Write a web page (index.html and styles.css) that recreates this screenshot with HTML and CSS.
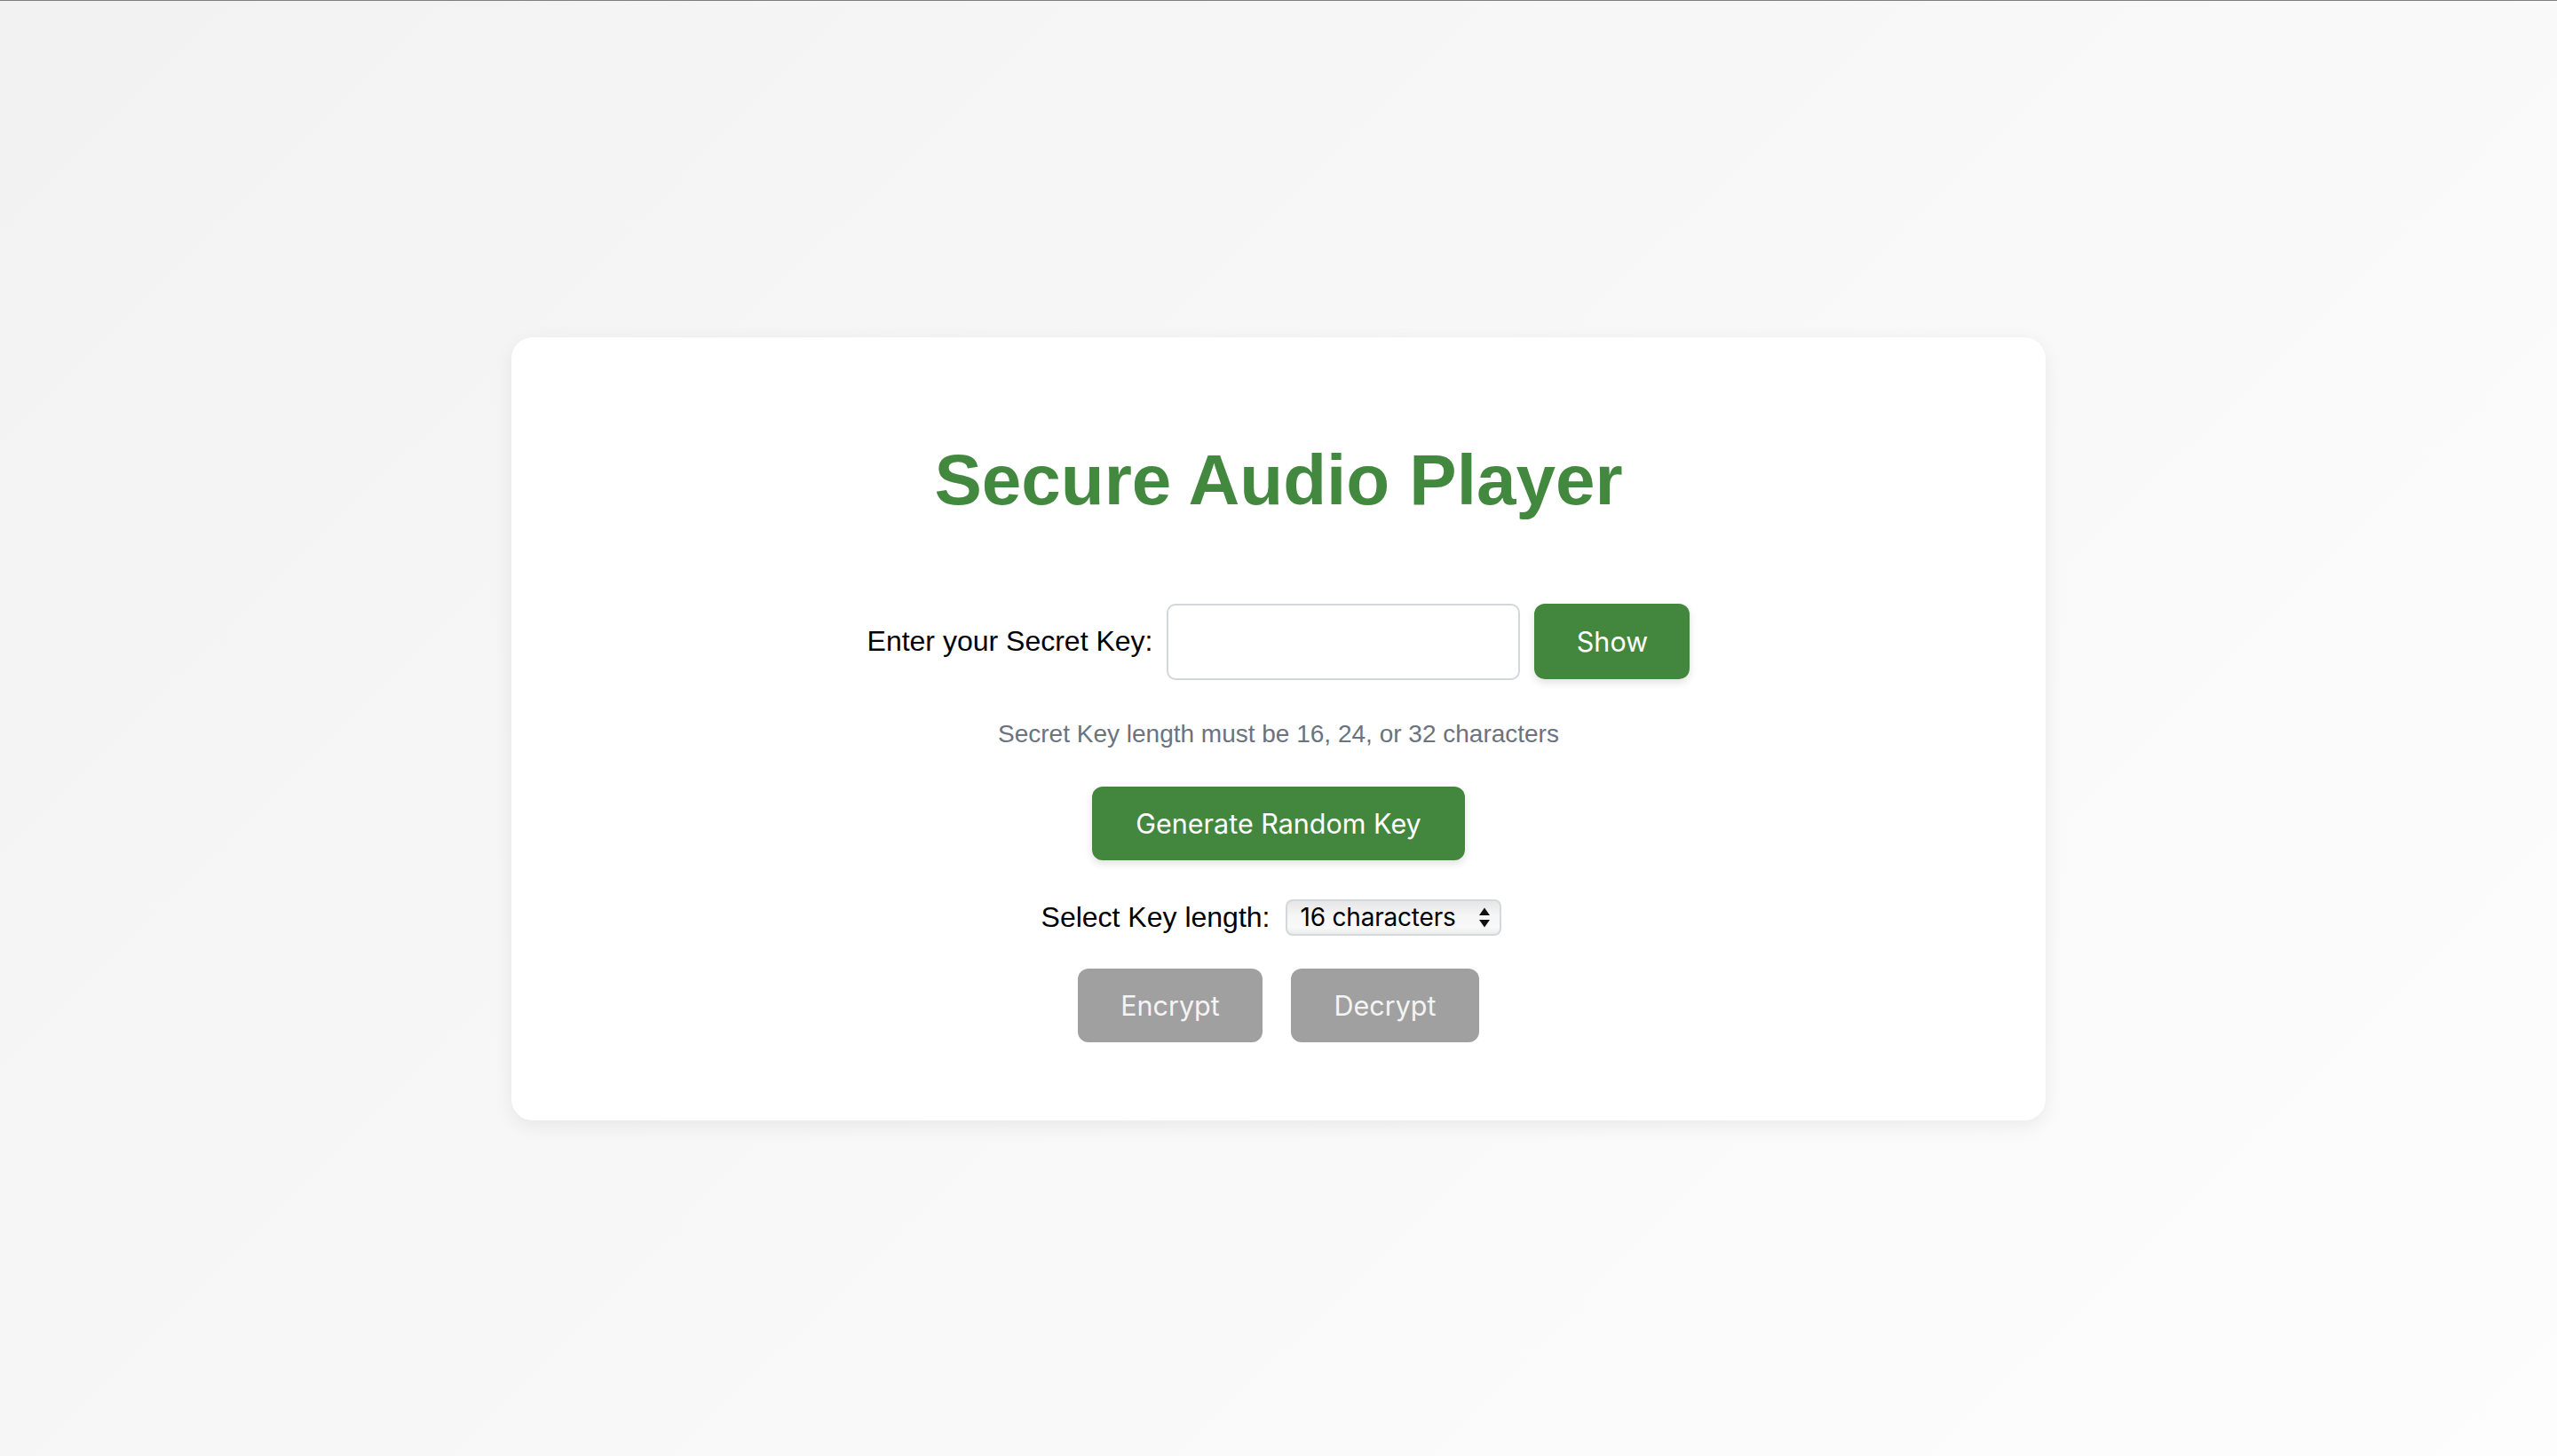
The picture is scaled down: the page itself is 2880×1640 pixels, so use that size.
FILE: index.html
```html
<!DOCTYPE html>
<html lang="en">
<head>
<meta charset="utf-8">
<title>Secure Audio Player</title>
<link rel="stylesheet" href="styles.css">
</head>
<body>
<main class="card">
  <h1 class="title">Secure Audio Player</h1>
  <div class="key-row">
    <label class="label" for="key">Enter your Secret Key:</label>
    <input class="key-input" id="key" type="password">
    <button class="btn btn-green btn-show">Show</button>
  </div>
  <p class="hint">Secret Key length must be 16, 24, or 32 characters</p>
  <button class="btn btn-green btn-generate">Generate Random Key</button>
  <div class="select-row">
    <label class="label" for="len">Select Key length:</label>
    <span class="select-wrap">
      <select class="key-select" id="len">
        <option>16 characters</option>
        <option>24 characters</option>
        <option>32 characters</option>
      </select>
      <svg class="select-arrows" width="14" height="23" viewBox="0 0 14 23"><path d="M7 0.5 L13 9 L1 9 Z" fill="#111"/><path d="M1 14 L13 14 L7 22.5 Z" fill="#111"/></svg>
    </span>
  </div>
  <div class="action-row">
    <button class="btn btn-gray btn-encrypt">Encrypt</button>
    <button class="btn btn-gray btn-decrypt">Decrypt</button>
  </div>
</main>
</body>
</html>
```

FILE: styles.css
```css
html, body {
  margin: 0;
  padding: 0;
}
body {
  box-sizing: border-box;
  min-height: 100vh;
  border-top: 1px solid #7f7f7f;
  background: linear-gradient(135deg, #f2f2f2 0%, #f8f8f8 50%, #fdfdfd 100%);
  display: flex;
  align-items: center;
  justify-content: center;
  font-family: "Liberation Sans", Arial, sans-serif;
}
.card {
  box-sizing: border-box;
  width: 1728px;
  background: #ffffff;
  border-radius: 24px;
  box-shadow: 0 6px 22px rgba(0, 0, 0, 0.07);
  padding: 115px 64px 88px;
  display: flex;
  flex-direction: column;
  align-items: center;
}
.title {
  margin: 0;
  font-family: "Liberation Sans", Arial, sans-serif;
  font-weight: bold;
  font-size: 80px;
  line-height: 92px;
  color: #43883f;
}
.key-row {
  margin-top: 93px;
  display: flex;
  align-items: center;
}
.label {
  font-family: "Liberation Sans", Arial, sans-serif;
  font-size: 32px;
  line-height: 37px;
  color: #000;
}
.key-input {
  box-sizing: border-box;
  width: 398px;
  height: 86px;
  margin-left: 16px;
  border: 2px solid #d3d6db;
  border-radius: 10px;
  background: #fff;
  outline: none;
  font-size: 30px;
  padding: 0 16px;
}
.btn {
  box-sizing: border-box;
  border: none;
  font-family: Inter, "Noto Sans", sans-serif;
  font-size: 30.5px;
  color: #fff;
  border-radius: 12px;
  display: inline-flex;
  align-items: center;
  justify-content: center;
  padding: 0;
}
.btn-green {
  background: #43873f;
  box-shadow: 0 4px 10px rgba(0, 0, 0, 0.12);
}
.btn-show {
  width: 175px;
  height: 85px;
  margin-left: 16px;
}
.hint {
  margin: 45px 0 0;
  font-family: "Liberation Sans", Arial, sans-serif;
  font-size: 28px;
  line-height: 32px;
  color: #6b7280;
}
.btn-generate {
  margin-top: 43px;
  width: 420px;
  height: 83px;
}
.select-row {
  margin-top: 44px;
  display: flex;
  align-items: center;
}
.select-wrap {
  position: relative;
  margin-left: 18px;
  margin-right: 16px;
  display: inline-block;
}
.key-select {
  -webkit-appearance: none;
  appearance: none;
  box-sizing: border-box;
  width: 243px;
  height: 41px;
  border: 2px solid #d4d7dc;
  border-radius: 8px;
  background: linear-gradient(to bottom, #e6e6e6 0%, #f6f6f6 45%, #f9f9f9 80%, #ececec 100%);
  font-family: Inter, "Noto Sans", sans-serif;
  font-size: 28px;
  letter-spacing: -0.2px;
  color: #000;
  padding: 0 0 0 14px;
  outline: none;
  display: block;
}
.select-arrows {
  position: absolute;
  right: 12px;
  top: 9px;
  pointer-events: none;
}
.action-row {
  margin-top: 37px;
  display: flex;
  gap: 32px;
}
.btn-gray {
  background: #a0a0a0;
  color: #f4f4f4;
  height: 83px;
}
.btn-encrypt {
  width: 208px;
}
.btn-decrypt {
  width: 212px;
}
```
